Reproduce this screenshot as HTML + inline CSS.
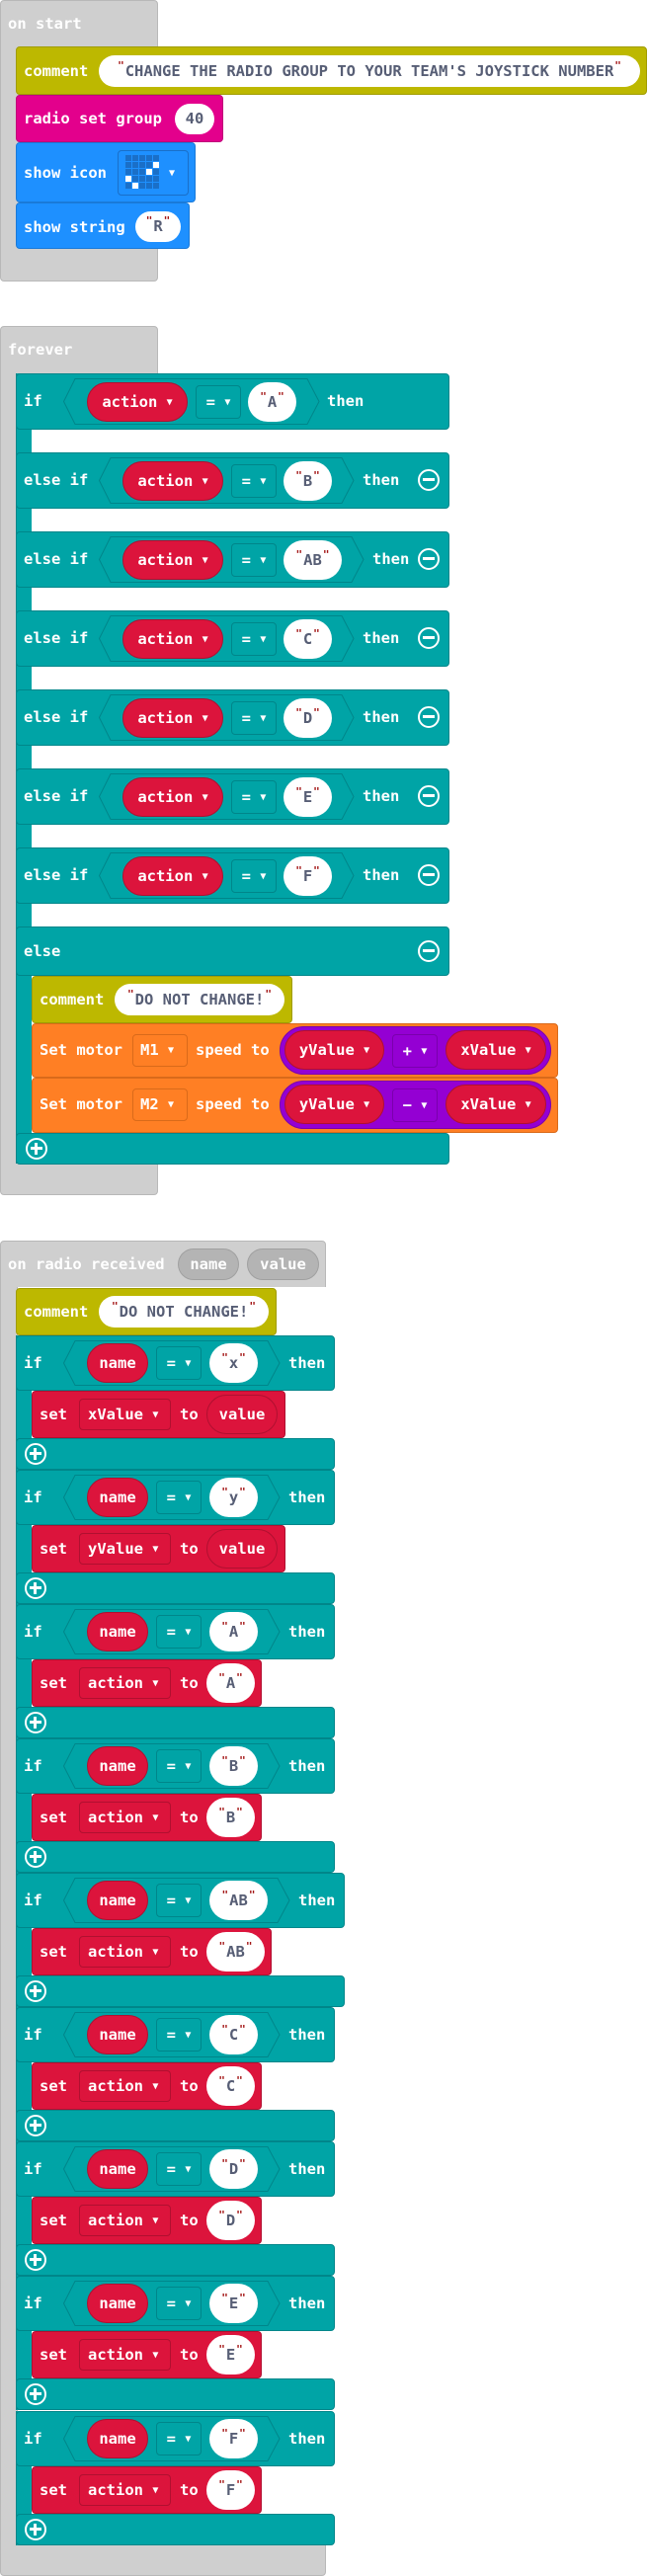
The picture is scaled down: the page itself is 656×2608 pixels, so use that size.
<!DOCTYPE html>
<html><head><meta charset="utf-8"><style>
body{margin:0;width:656px;height:2608px;background:#fff;position:relative;overflow:hidden;font:bold 15.5px "DejaVu Sans Mono","Liberation Mono",monospace}
div,svg{position:absolute;box-sizing:border-box}
.g{background:#cfcfcf;border:1px solid #b8b8b8;border-radius:4px}
.tl{background:#00a4a6;border:1px solid #00868a;border-radius:4px}
.tn{background:#00a4a6}
.t{color:#fff;white-space:nowrap;line-height:20px}
.s{background:#fff;color:#575e75;border-radius:20px;text-align:center;height:40px;line-height:40px;white-space:nowrap}
.q{color:#a31515;font-size:11px;position:relative;top:-7px;padding:0 1px}
.rp{background:#dc143c;border:1px solid #b01030;border-radius:20px;color:#fff;text-align:center;height:40px;line-height:38px;white-space:nowrap}
.eq{border:1px solid #00868a;border-radius:4px;color:#fff;text-align:center;height:34px;line-height:32px;width:46px}
.ar{font-size:10px;position:relative;top:-2px}
.mi{width:22px;height:22px;border:2.5px solid #fff;border-radius:50%}
.mi::after{content:"";position:absolute;left:3px;right:3px;top:7px;height:3px;background:#fff}
.pl{width:22px;height:22px;border:2.5px solid #fff;border-radius:50%}
.pl::after{content:"";position:absolute;left:3px;right:3px;top:7px;height:3px;background:#fff}
.pl::before{content:"";position:absolute;top:3px;bottom:3px;left:7px;width:3px;background:#fff}
.red{background:#dc143c;border:1px solid #b01030;border-radius:4px}
.dd{border:1px solid #b01030;border-radius:4px;height:32px;line-height:30px;color:#fff;padding-left:8px;white-space:nowrap}
</style></head><body>

<!-- ON START -->
<div class="g" style="left:0;top:0;width:160px;height:285px"></div>
<div class="t" style="left:8px;top:14px">on start</div>
<div style="left:16px;top:47px;width:639px;height:49px;background:#bdb800;border:1px solid #a09c00;border-radius:4px"></div>
<div class="t" style="left:24px;top:62px">comment</div>
<div class="s" style="left:100px;top:56px;width:548px;height:32px;line-height:32px"><span class="q">"</span>CHANGE THE RADIO GROUP TO YOUR TEAM'S JOYSTICK NUMBER<span class="q">"</span></div>
<div style="left:16px;top:96px;width:210px;height:48px;background:#e3008c;border:1px solid #c0007a;border-radius:4px"></div>
<div class="t" style="left:24px;top:110px">radio set group</div>
<div class="s" style="left:177px;top:105px;width:40px;height:31px;line-height:31px">40</div>
<div style="left:16px;top:144px;width:182px;height:61px;background:#1e90ff;border:1px solid #1a7ad8;border-radius:4px"></div>
<div class="t" style="left:24px;top:165px">show icon</div>
<div style="left:119px;top:152px;width:72px;height:46px;border:1px solid #1a6fc8;border-radius:4px"></div>
<svg style="left:127px;top:157px" width="36" height="36">
<g fill="#1a6fc8">
<rect x="0" y="0" width="6" height="6"/><rect x="7" y="0" width="6" height="6"/><rect x="14" y="0" width="6" height="6"/><rect x="21" y="0" width="6" height="6"/><rect x="28" y="0" width="6" height="6"/>
<rect x="0" y="7" width="6" height="6"/><rect x="7" y="7" width="6" height="6"/><rect x="14" y="7" width="6" height="6"/><rect x="21" y="7" width="6" height="6"/>
<rect x="0" y="14" width="6" height="6"/><rect x="7" y="14" width="6" height="6"/><rect x="14" y="14" width="6" height="6"/><rect x="28" y="14" width="6" height="6"/>
<rect x="7" y="21" width="6" height="6"/><rect x="14" y="21" width="6" height="6"/><rect x="21" y="21" width="6" height="6"/><rect x="28" y="21" width="6" height="6"/>
<rect x="0" y="28" width="6" height="6"/><rect x="14" y="28" width="6" height="6"/><rect x="21" y="28" width="6" height="6"/><rect x="28" y="28" width="6" height="6"/>
</g>
<g fill="#fff"><rect x="28" y="7" width="6" height="6"/><rect x="21" y="14" width="6" height="6"/><rect x="0" y="21" width="6" height="6"/><rect x="7" y="28" width="6" height="6"/></g>
</svg>
<div class="t" style="left:171px;top:165px"><span class="ar">▼</span></div>
<div style="left:16px;top:205px;width:176px;height:47px;background:#1e90ff;border:1px solid #1a7ad8;border-radius:4px"></div>
<div class="t" style="left:24px;top:220px">show string</div>
<div class="s" style="left:137px;top:214px;width:46px;height:31px;line-height:31px"><span class="q">"</span>R<span class="q">"</span></div>

<!-- FOREVER -->
<div class="g" style="left:0;top:330px;width:160px;height:880px"></div>
<div style="left:17px;top:378px;width:145px;height:800px;background:#fff;border-left:1px solid #b8b8b8"></div>
<div class="t" style="left:8px;top:344px">forever</div>
<div class="tn" style="left:16px;top:378px;width:16px;height:800px;border-left:1px solid #00868a"></div>
<!-- if A -->
<div class="tl" style="left:16px;top:378px;width:439px;height:57px"></div>
<div class="t" style="left:24px;top:396px">if</div>
<svg style="left:64px;top:383px" width="260" height="47"><polygon points="12,0.5 247,0.5 259,23.5 247,46.5 12,46.5 0.5,23.5" fill="none" stroke="#00868a"/></svg>
<div class="rp" style="left:88px;top:387px;width:102px">action <span class="ar">▼</span></div>
<div class="eq" style="left:198px;top:390px">= <span class="ar">▼</span></div>
<div class="s" style="left:251px;top:387px;width:49px"><span class="q">"</span>A<span class="q">"</span></div>
<div class="t" style="left:331px;top:396px">then</div>
<!-- else if rows -->
<div class="tl" style="left:16px;top:458px;width:439px;height:57px"></div>
<div class="t" style="left:24px;top:476px">else if</div>
<svg style="left:100px;top:463px" width="259" height="47"><polygon points="12,0.5 246,0.5 258,23.5 246,46.5 12,46.5 0.5,23.5" fill="none" stroke="#00868a"/></svg>
<div class="rp" style="left:124px;top:467px;width:102px">action <span class="ar">▼</span></div>
<div class="eq" style="left:234px;top:470px">= <span class="ar">▼</span></div>
<div class="s" style="left:287px;top:467px;width:49px"><span class="q">"</span>B<span class="q">"</span></div>
<div class="t" style="left:367px;top:476px">then</div>
<div class="mi" style="left:423px;top:475px"></div>

<div class="tl" style="left:16px;top:538px;width:439px;height:57px"></div>
<div class="t" style="left:24px;top:556px">else if</div>
<svg style="left:100px;top:543px" width="269" height="47"><polygon points="12,0.5 256,0.5 268,23.5 256,46.5 12,46.5 0.5,23.5" fill="none" stroke="#00868a"/></svg>
<div class="rp" style="left:124px;top:547px;width:102px">action <span class="ar">▼</span></div>
<div class="eq" style="left:234px;top:550px">= <span class="ar">▼</span></div>
<div class="s" style="left:287px;top:547px;width:59px"><span class="q">"</span>AB<span class="q">"</span></div>
<div class="t" style="left:377px;top:556px">then</div>
<div class="mi" style="left:423px;top:555px"></div>

<div class="tl" style="left:16px;top:618px;width:439px;height:57px"></div>
<div class="t" style="left:24px;top:636px">else if</div>
<svg style="left:100px;top:623px" width="259" height="47"><polygon points="12,0.5 246,0.5 258,23.5 246,46.5 12,46.5 0.5,23.5" fill="none" stroke="#00868a"/></svg>
<div class="rp" style="left:124px;top:627px;width:102px">action <span class="ar">▼</span></div>
<div class="eq" style="left:234px;top:630px">= <span class="ar">▼</span></div>
<div class="s" style="left:287px;top:627px;width:49px"><span class="q">"</span>C<span class="q">"</span></div>
<div class="t" style="left:367px;top:636px">then</div>
<div class="mi" style="left:423px;top:635px"></div>

<div class="tl" style="left:16px;top:698px;width:439px;height:57px"></div>
<div class="t" style="left:24px;top:716px">else if</div>
<svg style="left:100px;top:703px" width="259" height="47"><polygon points="12,0.5 246,0.5 258,23.5 246,46.5 12,46.5 0.5,23.5" fill="none" stroke="#00868a"/></svg>
<div class="rp" style="left:124px;top:707px;width:102px">action <span class="ar">▼</span></div>
<div class="eq" style="left:234px;top:710px">= <span class="ar">▼</span></div>
<div class="s" style="left:287px;top:707px;width:49px"><span class="q">"</span>D<span class="q">"</span></div>
<div class="t" style="left:367px;top:716px">then</div>
<div class="mi" style="left:423px;top:715px"></div>

<div class="tl" style="left:16px;top:778px;width:439px;height:57px"></div>
<div class="t" style="left:24px;top:796px">else if</div>
<svg style="left:100px;top:783px" width="259" height="47"><polygon points="12,0.5 246,0.5 258,23.5 246,46.5 12,46.5 0.5,23.5" fill="none" stroke="#00868a"/></svg>
<div class="rp" style="left:124px;top:787px;width:102px">action <span class="ar">▼</span></div>
<div class="eq" style="left:234px;top:790px">= <span class="ar">▼</span></div>
<div class="s" style="left:287px;top:787px;width:49px"><span class="q">"</span>E<span class="q">"</span></div>
<div class="t" style="left:367px;top:796px">then</div>
<div class="mi" style="left:423px;top:795px"></div>

<div class="tl" style="left:16px;top:858px;width:439px;height:57px"></div>
<div class="t" style="left:24px;top:876px">else if</div>
<svg style="left:100px;top:863px" width="259" height="47"><polygon points="12,0.5 246,0.5 258,23.5 246,46.5 12,46.5 0.5,23.5" fill="none" stroke="#00868a"/></svg>
<div class="rp" style="left:124px;top:867px;width:102px">action <span class="ar">▼</span></div>
<div class="eq" style="left:234px;top:870px">= <span class="ar">▼</span></div>
<div class="s" style="left:287px;top:867px;width:49px"><span class="q">"</span>F<span class="q">"</span></div>
<div class="t" style="left:367px;top:876px">then</div>
<div class="mi" style="left:423px;top:875px"></div>

<!-- else -->
<div class="tl" style="left:16px;top:938px;width:439px;height:50px"></div>
<div class="t" style="left:24px;top:953px">else</div>
<div class="mi" style="left:423px;top:952px"></div>
<div style="left:32px;top:988px;width:264px;height:48px;background:#bdb800;border:1px solid #a09c00;border-radius:4px"></div>
<div class="t" style="left:40px;top:1002px">comment</div>
<div class="s" style="left:116px;top:996px;width:172px;height:32px;line-height:32px"><span class="q">"</span>DO NOT CHANGE!<span class="q">"</span></div>
<!-- motor 1 -->
<div style="left:32px;top:1036px;width:533px;height:55px;background:#ff7f24;border:1px solid #d96a1a;border-radius:4px"></div>
<div class="t" style="left:40px;top:1053px">Set motor</div>
<div style="left:134px;top:1047px;width:56px;height:33px;border:1px solid #d96a1a;border-radius:4px;color:#fff;line-height:31px;padding-left:7px">M1 <span class="ar">▼</span></div>
<div class="t" style="left:198px;top:1053px">speed to</div>
<div style="left:283px;top:1039px;width:275px;height:49px;background:#9400d3;border:1px solid #7a00ad;border-radius:25px"></div>
<div class="rp" style="left:288px;top:1043px;width:101px">yValue <span class="ar">▼</span></div>
<div style="left:397px;top:1047px;width:46px;height:34px;border:1px solid #7a00ad;border-radius:4px;color:#fff;text-align:center;line-height:32px">+ <span class="ar">▼</span></div>
<div class="rp" style="left:451px;top:1043px;width:102px">xValue <span class="ar">▼</span></div>
<!-- motor 2 -->
<div style="left:32px;top:1091px;width:533px;height:56px;background:#ff7f24;border:1px solid #d96a1a;border-radius:4px"></div>
<div class="t" style="left:40px;top:1108px">Set motor</div>
<div style="left:134px;top:1102px;width:56px;height:33px;border:1px solid #d96a1a;border-radius:4px;color:#fff;line-height:31px;padding-left:7px">M2 <span class="ar">▼</span></div>
<div class="t" style="left:198px;top:1108px">speed to</div>
<div style="left:283px;top:1094px;width:275px;height:49px;background:#9400d3;border:1px solid #7a00ad;border-radius:25px"></div>
<div class="rp" style="left:288px;top:1098px;width:101px">yValue <span class="ar">▼</span></div>
<div style="left:397px;top:1102px;width:46px;height:34px;border:1px solid #7a00ad;border-radius:4px;color:#fff;text-align:center;line-height:32px">− <span class="ar">▼</span></div>
<div class="rp" style="left:451px;top:1098px;width:102px">xValue <span class="ar">▼</span></div>
<div class="tl" style="left:16px;top:1147px;width:439px;height:32px"></div>
<div class="pl" style="left:26px;top:1152px"></div>

<!-- ON RADIO RECEIVED -->
<div class="g" style="left:0;top:1256px;width:330px;height:1352px"></div>
<div style="left:17px;top:1303px;width:316px;height:1273px;background:#fff;border-left:1px solid #b8b8b8;border-bottom:1px solid #b8b8b8"></div>
<div class="t" style="left:8px;top:1270px">on radio received</div>
<div style="left:180px;top:1264px;width:62px;height:32px;border-radius:16px;background:#b4b4b4;border:1px solid #a0a0a0;color:#fff;text-align:center;line-height:30px">name</div>
<div style="left:250px;top:1264px;width:73px;height:32px;border-radius:16px;background:#b4b4b4;border:1px solid #a0a0a0;color:#fff;text-align:center;line-height:30px">value</div>
<div style="left:16px;top:1304px;width:264px;height:48px;background:#bdb800;border:1px solid #a09c00;border-radius:4px"></div>
<div class="t" style="left:24px;top:1318px">comment</div>
<div class="s" style="left:100px;top:1312px;width:172px;height:32px;line-height:32px"><span class="q">"</span>DO NOT CHANGE!<span class="q">"</span></div>

<!-- x -->
<div class="tn" style="left:16px;top:1352px;width:16px;height:136px;border-left:1px solid #00868a"></div>
<div class="tl" style="left:16px;top:1352px;width:323px;height:56px"></div>
<div class="t" style="left:24px;top:1370px">if</div>
<svg style="left:64px;top:1357px" width="220" height="46"><polygon points="12,0.5 207,0.5 219,23 207,45.5 12,45.5 0.5,23" fill="none" stroke="#00868a"/></svg>
<div class="rp" style="left:88px;top:1360px;width:62px">name</div>
<div class="eq" style="left:158px;top:1363px">= <span class="ar">▼</span></div>
<div class="s" style="left:212px;top:1360px;width:49px"><span class="q">"</span>x<span class="q">"</span></div>
<div class="t" style="left:292px;top:1370px">then</div>
<div class="red" style="left:32px;top:1408px;width:257px;height:48px"></div>
<div class="t" style="left:40px;top:1422px">set</div>
<div class="dd" style="left:80px;top:1416px;width:93px">xValue <span class="ar">▼</span></div>
<div class="t" style="left:182px;top:1422px">to</div>
<div class="rp" style="left:209px;top:1412px;width:72px">value</div>
<div class="tl" style="left:16px;top:1456px;width:323px;height:32px"></div>
<div class="pl" style="left:25px;top:1461px"></div>

<!-- y -->
<div class="tn" style="left:16px;top:1488px;width:16px;height:136px;border-left:1px solid #00868a"></div>
<div class="tl" style="left:16px;top:1488px;width:323px;height:56px"></div>
<div class="t" style="left:24px;top:1506px">if</div>
<svg style="left:64px;top:1493px" width="220" height="46"><polygon points="12,0.5 207,0.5 219,23 207,45.5 12,45.5 0.5,23" fill="none" stroke="#00868a"/></svg>
<div class="rp" style="left:88px;top:1496px;width:62px">name</div>
<div class="eq" style="left:158px;top:1499px">= <span class="ar">▼</span></div>
<div class="s" style="left:212px;top:1496px;width:49px"><span class="q">"</span>y<span class="q">"</span></div>
<div class="t" style="left:292px;top:1506px">then</div>
<div class="red" style="left:32px;top:1544px;width:257px;height:48px"></div>
<div class="t" style="left:40px;top:1558px">set</div>
<div class="dd" style="left:80px;top:1552px;width:93px">yValue <span class="ar">▼</span></div>
<div class="t" style="left:182px;top:1558px">to</div>
<div class="rp" style="left:209px;top:1548px;width:72px">value</div>
<div class="tl" style="left:16px;top:1592px;width:323px;height:32px"></div>
<div class="pl" style="left:25px;top:1597px"></div>

<!-- A -->
<div class="tn" style="left:16px;top:1624px;width:16px;height:136px;border-left:1px solid #00868a"></div>
<div class="tl" style="left:16px;top:1624px;width:323px;height:56px"></div>
<div class="t" style="left:24px;top:1642px">if</div>
<svg style="left:64px;top:1629px" width="220" height="46"><polygon points="12,0.5 207,0.5 219,23 207,45.5 12,45.5 0.5,23" fill="none" stroke="#00868a"/></svg>
<div class="rp" style="left:88px;top:1632px;width:62px">name</div>
<div class="eq" style="left:158px;top:1635px">= <span class="ar">▼</span></div>
<div class="s" style="left:212px;top:1632px;width:49px"><span class="q">"</span>A<span class="q">"</span></div>
<div class="t" style="left:292px;top:1642px">then</div>
<div class="red" style="left:32px;top:1680px;width:233px;height:48px"></div>
<div class="t" style="left:40px;top:1694px">set</div>
<div class="dd" style="left:80px;top:1688px;width:93px">action <span class="ar">▼</span></div>
<div class="t" style="left:182px;top:1694px">to</div>
<div class="s" style="left:209px;top:1684px;width:49px"><span class="q">"</span>A<span class="q">"</span></div>
<div class="tl" style="left:16px;top:1728px;width:323px;height:32px"></div>
<div class="pl" style="left:25px;top:1733px"></div>

<!-- B -->
<div class="tn" style="left:16px;top:1760px;width:16px;height:136px;border-left:1px solid #00868a"></div>
<div class="tl" style="left:16px;top:1760px;width:323px;height:56px"></div>
<div class="t" style="left:24px;top:1778px">if</div>
<svg style="left:64px;top:1765px" width="220" height="46"><polygon points="12,0.5 207,0.5 219,23 207,45.5 12,45.5 0.5,23" fill="none" stroke="#00868a"/></svg>
<div class="rp" style="left:88px;top:1768px;width:62px">name</div>
<div class="eq" style="left:158px;top:1771px">= <span class="ar">▼</span></div>
<div class="s" style="left:212px;top:1768px;width:49px"><span class="q">"</span>B<span class="q">"</span></div>
<div class="t" style="left:292px;top:1778px">then</div>
<div class="red" style="left:32px;top:1816px;width:233px;height:48px"></div>
<div class="t" style="left:40px;top:1830px">set</div>
<div class="dd" style="left:80px;top:1824px;width:93px">action <span class="ar">▼</span></div>
<div class="t" style="left:182px;top:1830px">to</div>
<div class="s" style="left:209px;top:1820px;width:49px"><span class="q">"</span>B<span class="q">"</span></div>
<div class="tl" style="left:16px;top:1864px;width:323px;height:32px"></div>
<div class="pl" style="left:25px;top:1869px"></div>

<!-- AB -->
<div class="tn" style="left:16px;top:1896px;width:16px;height:136px;border-left:1px solid #00868a"></div>
<div class="tl" style="left:16px;top:1896px;width:333px;height:56px"></div>
<div class="t" style="left:24px;top:1914px">if</div>
<svg style="left:64px;top:1901px" width="230" height="46"><polygon points="12,0.5 217,0.5 229,23 217,45.5 12,45.5 0.5,23" fill="none" stroke="#00868a"/></svg>
<div class="rp" style="left:88px;top:1904px;width:62px">name</div>
<div class="eq" style="left:158px;top:1907px">= <span class="ar">▼</span></div>
<div class="s" style="left:212px;top:1904px;width:59px"><span class="q">"</span>AB<span class="q">"</span></div>
<div class="t" style="left:302px;top:1914px">then</div>
<div class="red" style="left:32px;top:1952px;width:243px;height:48px"></div>
<div class="t" style="left:40px;top:1966px">set</div>
<div class="dd" style="left:80px;top:1960px;width:93px">action <span class="ar">▼</span></div>
<div class="t" style="left:182px;top:1966px">to</div>
<div class="s" style="left:209px;top:1956px;width:59px"><span class="q">"</span>AB<span class="q">"</span></div>
<div class="tl" style="left:16px;top:2000px;width:333px;height:32px"></div>
<div class="pl" style="left:25px;top:2005px"></div>

<!-- C -->
<div class="tn" style="left:16px;top:2032px;width:16px;height:136px;border-left:1px solid #00868a"></div>
<div class="tl" style="left:16px;top:2032px;width:323px;height:56px"></div>
<div class="t" style="left:24px;top:2050px">if</div>
<svg style="left:64px;top:2037px" width="220" height="46"><polygon points="12,0.5 207,0.5 219,23 207,45.5 12,45.5 0.5,23" fill="none" stroke="#00868a"/></svg>
<div class="rp" style="left:88px;top:2040px;width:62px">name</div>
<div class="eq" style="left:158px;top:2043px">= <span class="ar">▼</span></div>
<div class="s" style="left:212px;top:2040px;width:49px"><span class="q">"</span>C<span class="q">"</span></div>
<div class="t" style="left:292px;top:2050px">then</div>
<div class="red" style="left:32px;top:2088px;width:233px;height:48px"></div>
<div class="t" style="left:40px;top:2102px">set</div>
<div class="dd" style="left:80px;top:2096px;width:93px">action <span class="ar">▼</span></div>
<div class="t" style="left:182px;top:2102px">to</div>
<div class="s" style="left:209px;top:2092px;width:49px"><span class="q">"</span>C<span class="q">"</span></div>
<div class="tl" style="left:16px;top:2136px;width:323px;height:32px"></div>
<div class="pl" style="left:25px;top:2141px"></div>

<!-- D -->
<div class="tn" style="left:16px;top:2168px;width:16px;height:136px;border-left:1px solid #00868a"></div>
<div class="tl" style="left:16px;top:2168px;width:323px;height:56px"></div>
<div class="t" style="left:24px;top:2186px">if</div>
<svg style="left:64px;top:2173px" width="220" height="46"><polygon points="12,0.5 207,0.5 219,23 207,45.5 12,45.5 0.5,23" fill="none" stroke="#00868a"/></svg>
<div class="rp" style="left:88px;top:2176px;width:62px">name</div>
<div class="eq" style="left:158px;top:2179px">= <span class="ar">▼</span></div>
<div class="s" style="left:212px;top:2176px;width:49px"><span class="q">"</span>D<span class="q">"</span></div>
<div class="t" style="left:292px;top:2186px">then</div>
<div class="red" style="left:32px;top:2224px;width:233px;height:48px"></div>
<div class="t" style="left:40px;top:2238px">set</div>
<div class="dd" style="left:80px;top:2232px;width:93px">action <span class="ar">▼</span></div>
<div class="t" style="left:182px;top:2238px">to</div>
<div class="s" style="left:209px;top:2228px;width:49px"><span class="q">"</span>D<span class="q">"</span></div>
<div class="tl" style="left:16px;top:2272px;width:323px;height:32px"></div>
<div class="pl" style="left:25px;top:2277px"></div>

<!-- E -->
<div class="tn" style="left:16px;top:2304px;width:16px;height:136px;border-left:1px solid #00868a"></div>
<div class="tl" style="left:16px;top:2304px;width:323px;height:56px"></div>
<div class="t" style="left:24px;top:2322px">if</div>
<svg style="left:64px;top:2309px" width="220" height="46"><polygon points="12,0.5 207,0.5 219,23 207,45.5 12,45.5 0.5,23" fill="none" stroke="#00868a"/></svg>
<div class="rp" style="left:88px;top:2312px;width:62px">name</div>
<div class="eq" style="left:158px;top:2315px">= <span class="ar">▼</span></div>
<div class="s" style="left:212px;top:2312px;width:49px"><span class="q">"</span>E<span class="q">"</span></div>
<div class="t" style="left:292px;top:2322px">then</div>
<div class="red" style="left:32px;top:2360px;width:233px;height:48px"></div>
<div class="t" style="left:40px;top:2374px">set</div>
<div class="dd" style="left:80px;top:2368px;width:93px">action <span class="ar">▼</span></div>
<div class="t" style="left:182px;top:2374px">to</div>
<div class="s" style="left:209px;top:2364px;width:49px"><span class="q">"</span>E<span class="q">"</span></div>
<div class="tl" style="left:16px;top:2408px;width:323px;height:32px"></div>
<div class="pl" style="left:25px;top:2413px"></div>

<!-- F -->
<div class="tn" style="left:16px;top:2441px;width:16px;height:136px;border-left:1px solid #00868a"></div>
<div class="tl" style="left:16px;top:2441px;width:323px;height:56px"></div>
<div class="t" style="left:24px;top:2459px">if</div>
<svg style="left:64px;top:2446px" width="220" height="46"><polygon points="12,0.5 207,0.5 219,23 207,45.5 12,45.5 0.5,23" fill="none" stroke="#00868a"/></svg>
<div class="rp" style="left:88px;top:2449px;width:62px">name</div>
<div class="eq" style="left:158px;top:2452px">= <span class="ar">▼</span></div>
<div class="s" style="left:212px;top:2449px;width:49px"><span class="q">"</span>F<span class="q">"</span></div>
<div class="t" style="left:292px;top:2459px">then</div>
<div class="red" style="left:32px;top:2497px;width:233px;height:48px"></div>
<div class="t" style="left:40px;top:2511px">set</div>
<div class="dd" style="left:80px;top:2505px;width:93px">action <span class="ar">▼</span></div>
<div class="t" style="left:182px;top:2511px">to</div>
<div class="s" style="left:209px;top:2501px;width:49px"><span class="q">"</span>F<span class="q">"</span></div>
<div class="tl" style="left:16px;top:2545px;width:323px;height:32px"></div>
<div class="pl" style="left:25px;top:2550px"></div>

</body></html>
